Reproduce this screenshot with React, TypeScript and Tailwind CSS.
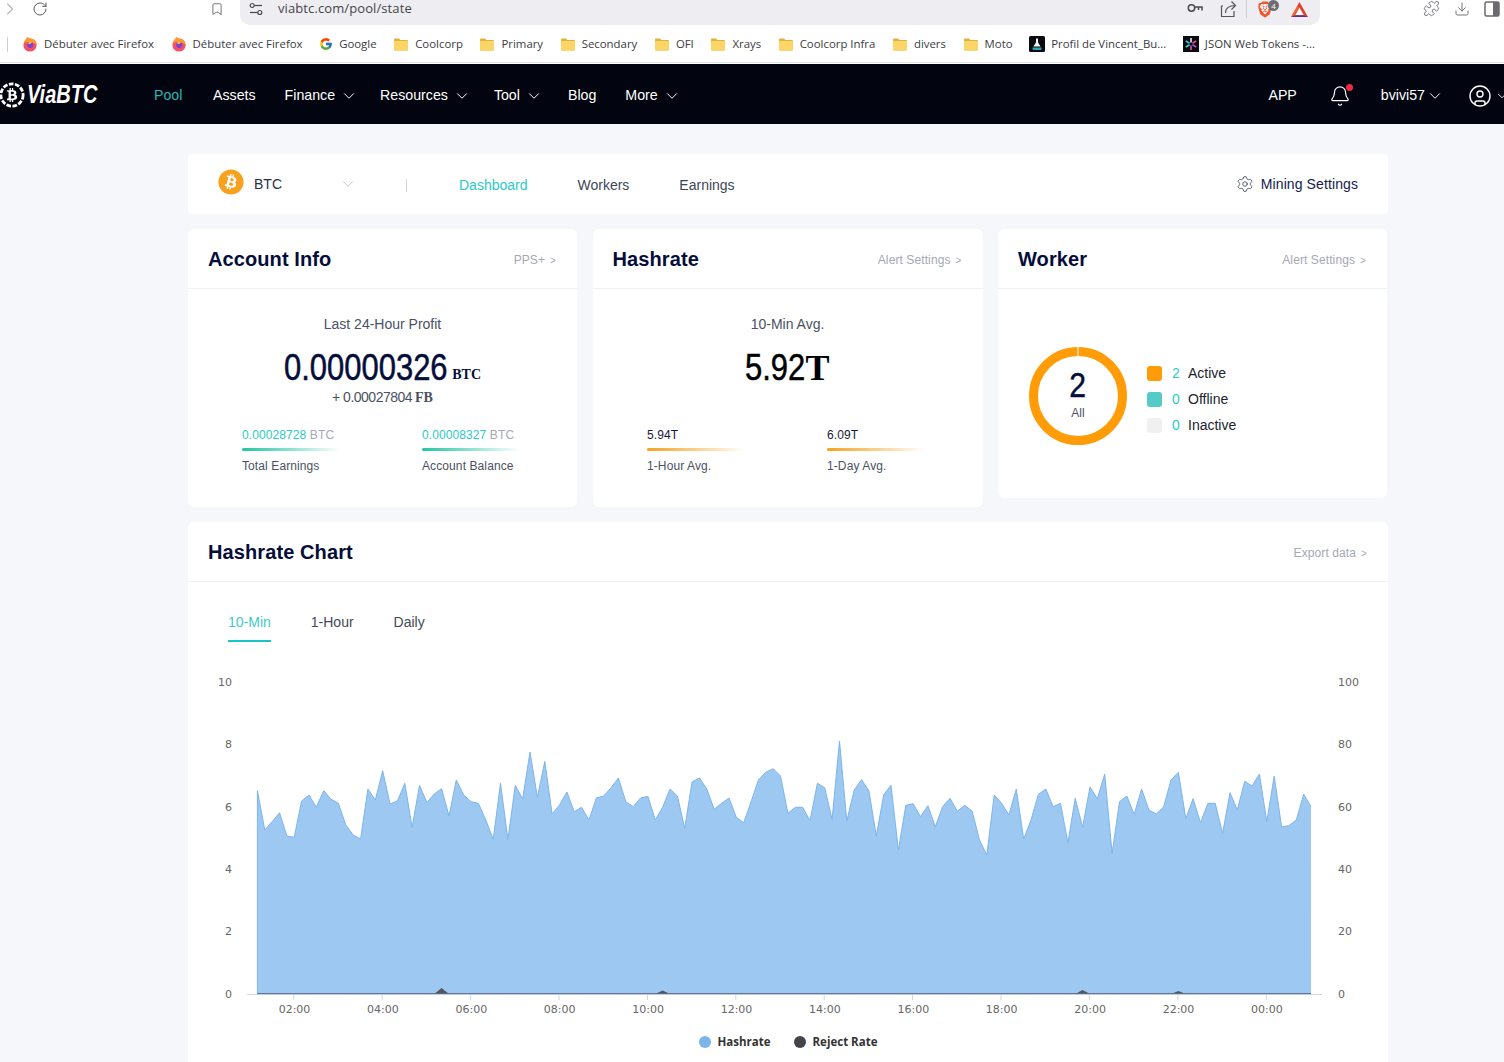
import { Bell, Bookmark, ChevronDown, ChevronRight, CircleUser, Download, Puzzle, RotateCw, Settings } from "lucide-react";
import { FaBitcoin, FaBtc } from "react-icons/fa";
import { FcGoogle } from "react-icons/fc";
import { SiBrave } from "react-icons/si";

// hashrate readings, traced as y offsets (3x) from the top of the plot crop
const HASHRATE = [
  212, 330, 305, 278, 348, 352, 243, 225, 262, 212, 238, 250, 315, 345, 357, 207, 240, 152, 252, 243, 190, 322, 196,
  248, 222, 206, 288, 180, 225, 245, 250, 300, 358, 190, 358, 196, 237, 96, 232, 124, 282, 255, 216, 275, 262, 300,
  234, 228, 203, 174, 245, 260, 234, 229, 300, 262, 207, 228, 325, 185, 174, 207, 268, 250, 234, 292, 308, 245, 180,
  157, 146, 168, 280, 262, 262, 302, 190, 203, 298, 63, 303, 210, 179, 212, 348, 224, 196, 390, 256, 251, 290, 257,
  320, 260, 235, 274, 256, 273, 360, 405, 225, 250, 285, 207, 357, 300, 223, 207, 260, 250, 368, 235, 322, 201, 236,
  162, 400, 245, 228, 283, 207, 270, 282, 260, 180, 157, 296, 236, 308, 250, 250, 340, 218, 270, 184, 198, 162, 305,
  168, 321, 317, 300, 223, 260,
];

const X0 = 257.4;
const STEP = 7.368;
const BASE = 994;

const hashLine = HASHRATE.map((z, i) => `${(X0 + STEP * i).toFixed(1)},${(720 + z / 3).toFixed(1)}`).join(" ");
const hashArea = `M${X0},${BASE} L${hashLine} L${X0 + STEP * 143},${BASE} Z`;

const REJECT = [
  { i: 25, top: 988 },
  { i: 55, top: 990.5 },
  { i: 112, top: 990 },
  { i: 125, top: 991 },
];

const TIMES = ["02:00", "04:00", "06:00", "08:00", "10:00", "12:00", "14:00", "16:00", "18:00", "20:00", "22:00", "00:00"];
const LEFT_AXIS = [
  { v: "10", y: 682 },
  { v: "8", y: 744 },
  { v: "6", y: 807 },
  { v: "4", y: 869 },
  { v: "2", y: 931 },
  { v: "0", y: 994 },
];
const RIGHT_AXIS = ["100", "80", "60", "40", "20", "0"];

function FirefoxIcon() {
  return (
    <svg viewBox="0 0 16 16" className="w-4 h-4 shrink-0">
      <circle cx="8" cy="9" r="6.6" fill="#f4506a" />
      <path d="M1.8 7 C2.6 3.6 5 2.4 5.8 .6 C6.4 2.4 8 2.6 10 3 C13 3.6 14.8 6.4 14.6 9 C12 6 6 5 1.8 7 Z" fill="#ff9a2e" />
      <circle cx="8.2" cy="9" r="3" fill="#7a45cc" />
      <path d="M5.8 7 C7 5.6 9.4 5.8 10.4 7 C9 6.6 8.4 7.4 8.6 8 C7.4 8 6.4 7.8 5.8 7 Z" fill="#ffbd4f" />
    </svg>
  );
}

function FolderIcon() {
  return (
    <svg viewBox="0 0 16 16" className="w-4 h-4 shrink-0">
      <path d="M1 3.5 a1 1 0 0 1 1-1 h4 l1.5 1.5 h6.5 a1 1 0 0 1 1 1 v8.5 a1 1 0 0 1-1 1 h-12 a1 1 0 0 1-1-1 Z" fill="#e0b13c" />
      <rect x="1" y="5" width="14" height="9.5" rx="1" fill="#fbd667" />
    </svg>
  );
}

function ProfileIcon() {
  return (
    <svg viewBox="0 0 16 16" className="w-4 h-4 shrink-0">
      <rect width="16" height="16" rx="1.5" fill="#0b0b0f" />
      <path d="M7 2.5 h2 v4 l2.6 4 h-7.2 L7 6.5 Z" fill="#f4f4f4" />
      <path d="M3.5 11.5 h9 v1.5 a1 1 0 0 1-1 1 h-7 a1 1 0 0 1-1-1 Z" fill="#25a6b8" />
    </svg>
  );
}

function JwtIcon() {
  return (
    <svg viewBox="0 0 16 16" className="w-4 h-4 shrink-0">
      <rect width="16" height="16" fill="#0b0b0f" />
      <g strokeWidth="1.6">
        <path d="M8 2 V6.4" stroke="#f0f0f0" />
        <path d="M8 9.6 V14" stroke="#e74ea8" />
        <path d="M2.8 5 L6.6 7.2" stroke="#28c8e8" />
        <path d="M9.4 8.8 L13.2 11" stroke="#9a58e0" />
        <path d="M13.2 5 L9.4 7.2" stroke="#e84c8c" />
        <path d="M6.6 8.8 L2.8 11" stroke="#35d8b8" />
      </g>
    </svg>
  );
}

function BrowserBar() {
  const bookmarks = [
    { icon: <FirefoxIcon />, label: "Débuter avec Firefox" },
    { icon: <FirefoxIcon />, label: "Débuter avec Firefox" },
    { icon: <FcGoogle className="w-[14px] h-[14px] shrink-0" />, label: "Google" },
    { icon: <FolderIcon />, label: "Coolcorp" },
    { icon: <FolderIcon />, label: "Primary" },
    { icon: <FolderIcon />, label: "Secondary" },
    { icon: <FolderIcon />, label: "OFI" },
    { icon: <FolderIcon />, label: "Xrays" },
    { icon: <FolderIcon />, label: "Coolcorp Infra" },
    { icon: <FolderIcon />, label: "divers" },
    { icon: <FolderIcon />, label: "Moto" },
    { icon: <ProfileIcon />, label: "Profil de Vincent_Bu..." },
    { icon: <JwtIcon />, label: "JSON Web Tokens -..." },
  ];

  return (
    <div className="h-16 bg-white font-['Open_Sans',sans-serif] text-[#3b3b3f]">
      <div className="h-[26px] flex items-start">
        <div className="w-[240px] h-[17px] flex items-center shrink-0 text-[#5b5b60]">
          <ChevronRight className="w-5 h-5 text-[#b5b5ba]" strokeWidth={1.3} />
          <RotateCw className="w-4 h-4 ml-3" strokeWidth={1.5} />
          <Bookmark className="w-[14px] h-4 ml-[162px]" strokeWidth={1.4} />
        </div>
        <div className="w-[1080px] h-[25px] bg-[#eeeef2] rounded-b-[10px] flex items-center pl-[9px] pr-[11px] pb-[7px]">
          <svg viewBox="0 0 14 14" className="w-[14px] h-[14px] text-[#45454a]" fill="none" stroke="currentColor" strokeWidth="1.2">
            <circle cx="3.2" cy="3.5" r="2" />
            <path d="M5.5 3.5 H13" />
            <circle cx="10.8" cy="10.5" r="2" />
            <path d="M1 10.5 H8.5" />
          </svg>
          <span className="ml-[15px] text-[13px] tracking-[0.1px] text-[#44444a]">viabtc.com/pool/state</span>
          <div className="ml-auto flex items-center">
            <svg viewBox="0 0 16 12" className="w-4 h-3 text-[#4a4a50]" fill="none" stroke="currentColor" strokeWidth="1.5">
              <circle cx="4.5" cy="5" r="3.2" />
              <path d="M7.8 4 H15 V7.5 M11.5 4 V7" />
            </svg>
            <svg viewBox="0 0 17 18" className="w-[17px] h-[18px] ml-[17px] text-[#55555a]" fill="none" stroke="currentColor" strokeWidth="1.2">
              <path d="M3 6 H1.5 V16.5 H14 V11" />
              <path d="M5.5 13 C5.5 8 9 5.5 15.5 5.5 M11.5 1.5 L15.5 5.5 L11.5 9.5" />
            </svg>
            <div className="w-px h-[18px] bg-[#cfcfd4] ml-[9px]" />
            <div className="relative ml-[10px]">
              <SiBrave className="w-[16px] h-[19px] text-[#f0572a]" />
              <span className="absolute top-0 -right-[6px] w-[11px] h-[11px] rounded-full bg-[#6d6d73] text-white text-[8px] leading-[11px] text-center">
                4
              </span>
            </div>
            <svg viewBox="0 0 20 18" className="w-[19px] h-[17px] ml-[17px]">
              <path d="M10 1 L19 17 H1 Z" fill="#e5402f" />
              <path d="M10 7 L14.6 15 H5.4 Z" fill="#fff" />
              <path d="M1 17 L5.4 15 H14.6 L19 17 Z" fill="#662d91" />
              <path d="M10 7 L5.4 15 L1 17 L7 6 Z" fill="#f4792f" opacity="0.6" />
            </svg>
          </div>
        </div>
        <div className="flex-1 flex items-center h-[17px] pl-[103px] text-[#6a6a70]">
          <Puzzle className="w-[17px] h-[17px]" strokeWidth={1.3} />
          <Download className="w-4 h-4 ml-[14px]" strokeWidth={1.4} />
          <svg viewBox="0 0 16 16" className="w-4 h-4 ml-[14px]">
            <rect x="1" y="1" width="14" height="14" rx="1.5" fill="#fff" stroke="currentColor" strokeWidth="1.5" />
            <rect x="9" y="1" width="6" height="14" fill="currentColor" />
          </svg>
        </div>
      </div>
      <div className="h-[37px] flex items-center border-b border-[#e3e3e6] pl-[7px]">
        <div className="w-px h-[15px] bg-[#d0d0d4] mr-[14px]" />
        <div className="flex items-center gap-[16.6px] text-[11.4px] whitespace-nowrap">
          {bookmarks.map((b, i) => (
            <div key={i} className="flex items-center gap-1.5">
              {b.icon}
              <span>{b.label}</span>
            </div>
          ))}
        </div>
      </div>
    </div>
  );
}

function NavItem({ label, active, caret, className }: { label: string; active?: boolean; caret?: boolean; className?: string }) {
  return (
    <div className={`flex items-center ${active ? "text-[#2bb6b3]" : "text-white"} ${className ?? ""}`}>
      <span>{label}</span>
      {caret && <ChevronDown className="w-[18px] h-[18px] ml-[5px] -mr-[7px]" strokeWidth={1.3} />}
    </div>
  );
}

function TopNav() {
  return (
    <div className="h-[60px] pt-1 bg-[#02040f] flex items-center text-[14.2px] whitespace-nowrap overflow-hidden">
      <div className="w-[154px] shrink-0 flex items-center -mt-[3px]">
        <div className="relative w-[26px] h-[28px] -ml-px shrink-0 flex items-center justify-center">
          <svg viewBox="0 0 28 28" className="absolute inset-0 w-full h-full">
            <circle cx="14" cy="14" r="12" fill="none" stroke="#fff" strokeWidth="3" strokeDasharray="5 1.6" />
          </svg>
          <FaBtc className="w-[12px] h-[14px] text-white" />
        </div>
        <span className="inline-block ml-[2px] text-[25px] leading-none italic font-bold text-white origin-left scale-x-[0.8]">
          ViaBTC
        </span>
      </div>
      <div className="flex items-center gap-[29px]">
        <NavItem label="Pool" active className="mr-[1.6px]" />
        <NavItem label="Assets" />
        <NavItem label="Finance" caret />
        <NavItem label="Resources" caret className="mr-px" />
        <NavItem label="Tool" caret className="mr-[3px]" />
        <NavItem label="Blog" />
        <NavItem label="More" caret />
      </div>
      <div className="ml-auto flex items-center text-white shrink-0 -mr-[5px]">
        <span>APP</span>
        <div className="relative ml-[32px]">
          <Bell className="w-[22px] h-[24px]" strokeWidth={1.3} />
          <span className="absolute top-0 right-[-2px] w-[7px] h-[7px] rounded-full bg-[#ee2a44]" />
        </div>
        <span className="ml-[30px]">bvivi57</span>
        <ChevronDown className="w-[18px] h-[18px] ml-px" strokeWidth={1.3} />
        <CircleUser className="w-6 h-6 ml-6" strokeWidth={1.4} />
        <ChevronDown className="w-[14px] h-[14px] ml-[3px]" strokeWidth={1.5} />
      </div>
    </div>
  );
}

function SubNav() {
  return (
    <div className="h-[60px] bg-white rounded-[4px] flex items-center pl-[30px] pr-[30px]">
      <FaBitcoin className="w-[26px] h-[26px] text-[#f7a11e] -mt-1" />
      <span className="ml-[10px] w-[85px] text-[14px] text-[#2a2f45]">BTC</span>
      <ChevronDown className="w-[18px] h-[18px] text-[#b4b8c2]" strokeWidth={1.1} />
      <div className="w-px h-[13px] mt-0.5 bg-[#d0d3d8] ml-[49px]" />
      <div className="flex items-center gap-[50px] ml-[52px] text-[14px] text-[#3d4656] mt-0.5">
        <span className="text-[#2ccac6]">Dashboard</span>
        <span>Workers</span>
        <span>Earnings</span>
      </div>
      <div className="ml-auto flex items-center text-[14px] text-[#14204f]">
        <Settings className="w-[18px] h-[18px] text-[#3a4358]" strokeWidth={1.1} />
        <span className="ml-[7px] tracking-[0.1px]">Mining Settings</span>
      </div>
    </div>
  );
}

function Card({ title, link, children }: { title: string; link: string; children: React.ReactNode }) {
  return (
    <div className="bg-white rounded-[6px]">
      <div className="h-[60px] flex items-center justify-between pl-5 pr-[21px] border-b border-[#f0f1f3]">
        <h2 className="text-[20px] font-bold text-[#050d3a] tracking-[0.1px]">{title}</h2>
        <LinkText label={link} />
      </div>
      {children}
    </div>
  );
}

function LinkText({ label }: { label: string }) {
  return (
    <span className="mt-[2px] text-[12px] tracking-[0.1px] text-[#a5a8b5]">
      {label}
      <span className="ml-[5px] text-[10px]">&gt;</span>
    </span>
  );
}

function Stat({ value, unit, label, barFrom }: { value: string; unit?: string; label: string; barFrom: string }) {
  return (
    <div>
      <div className="text-[12px] leading-4 tracking-[0.1px]">
        <span className={unit ? "text-[#2ccac6]" : "text-[#141a38]"}>{value}</span>
        {unit && <span className="text-[#a5a8b5]"> {unit}</span>}
      </div>
      <div className={`mt-[5px] w-[98px] h-[3px] rounded-l-full bg-gradient-to-r to-transparent ${barFrom}`} />
      <div className="mt-[7px] text-[12px] leading-4 tracking-[0.1px] text-[#4a5262]">{label}</div>
    </div>
  );
}

function BigNumber({ children }: { children: string }) {
  return (
    <span className="inline-block text-[36px] leading-10 origin-left scale-x-[0.86] [-webkit-text-stroke:0.5px]">
      {children}
    </span>
  );
}

function AccountInfo() {
  return (
    <Card title="Account Info" link="PPS+">
      <div className="pt-[25px] pb-[33px]">
        <div className="text-center text-[14px] leading-5 text-[#4a5262]">Last 24-Hour Profit</div>
        <div className="mt-[14px] h-10 flex justify-center items-center text-[#050d3a]">
          <BigNumber>0.00000326</BigNumber>
          <span className="-ml-[22px] mt-[12px] font-['Liberation_Serif',serif] font-bold text-[14px]">BTC</span>
        </div>
        <div className="-mt-px h-5 flex justify-center items-center text-[14px] text-[#4a5262]">
          <span className="inline-block tracking-[-0.5px]">+ 0.00027804</span>
          <span className="ml-[3px] font-['Liberation_Serif',serif] font-bold">FB</span>
        </div>
        <div className="mt-5 pl-[54px] grid grid-cols-[180px_1fr]">
          <Stat value="0.00028728" unit="BTC" label="Total Earnings" barFrom="from-[#1fc6a0]" />
          <Stat value="0.00008327" unit="BTC" label="Account Balance" barFrom="from-[#1fc6a0]" />
        </div>
      </div>
    </Card>
  );
}

function Hashrate() {
  return (
    <Card title="Hashrate" link="Alert Settings">
      <div className="pt-[25px] pb-[33px]">
        <div className="text-center text-[14px] leading-5 text-[#4a5262]">10-Min Avg.</div>
        <div className="mt-[14px] h-10 flex justify-center items-center text-black">
          <BigNumber>5.92</BigNumber>
          <span className="-ml-[10px] font-['Liberation_Serif',serif] font-bold text-[36px] leading-10">T</span>
        </div>
        <div className="-mt-px h-5" />
        <div className="mt-5 pl-[54.5px] grid grid-cols-[180px_1fr]">
          <Stat value="5.94T" label="1-Hour Avg." barFrom="from-[#f5a21e]" />
          <Stat value="6.09T" label="1-Day Avg." barFrom="from-[#f5a21e]" />
        </div>
      </div>
    </Card>
  );
}

function Worker() {
  const rows = [
    { color: "bg-[#ff9c07]", n: "2", label: "Active" },
    { color: "bg-[#55cbc9]", n: "0", label: "Offline" },
    { color: "bg-[#f0f0f1]", n: "0", label: "Inactive" },
  ];
  return (
    <Card title="Worker" link="Alert Settings">
      <div className="pt-[58px] pb-[53px] pl-[31px] flex items-start">
        <div className="relative w-[98px] h-[98px] shrink-0">
          <svg viewBox="0 0 98 98" className="w-full h-full">
            <circle cx="49" cy="49" r="44.5" fill="none" stroke="#ff9c07" strokeWidth="9" />
            <rect x="48.5" y="0" width="1" height="9" fill="#fff" />
          </svg>
          <div className="absolute inset-0 flex flex-col items-center">
            <span className="mt-[18px] h-10 text-[35px] leading-10 text-[#050d3a] scale-x-[0.86] [-webkit-text-stroke:0.5px]">
              2
            </span>
            <span className="text-[12px] leading-4 text-[#4a5262]">All</span>
          </div>
        </div>
        <div className="ml-[20px] mt-[13px] text-[14px]">
          {rows.map((r) => (
            <div key={r.label} className="h-[26px] flex items-center">
              <div className={`w-[15px] h-[15px] rounded-[3px] ${r.color}`} />
              <span className="ml-[10px] w-[16px] text-[#2ccac6]">{r.n}</span>
              <span className="text-[#20242f]">{r.label}</span>
            </div>
          ))}
        </div>
      </div>
    </Card>
  );
}

function ChartPlot() {
  const tick = "font-['DejaVu_Sans',sans-serif] text-[11px] fill-[#666666]";
  return (
    <svg viewBox="188 660 1200 366" className="block w-[1200px] h-[366px]">
      {LEFT_AXIS.map((a, i) => (
        <g key={a.v}>
          <text x={232} y={a.y + 4} textAnchor="end" className={tick}>
            {a.v}
          </text>
          <text x={1338} y={a.y + 4} className={tick}>
            {RIGHT_AXIS[i]}
          </text>
        </g>
      ))}
      <path d={`M247 994.5 H1322`} stroke="#ccd6eb" />
      {TIMES.map((t, i) => {
        const x = 293.8 + 88.4 * i;
        return (
          <g key={t}>
            <path d={`M${x} 994 V1000`} stroke="#ccd6eb" />
            <text x={x + 0.7} y={1013} textAnchor="middle" className={tick}>
              {t}
            </text>
          </g>
        );
      })}
      <path d={hashArea} fill="#7cb5ec" fillOpacity="0.75" />
      <polyline points={hashLine} fill="none" stroke="#7cb5ec" />
      <path d={`M${X0} ${BASE} V${720 + HASHRATE[0] / 3}`} stroke="#7cb5ec" />
      {REJECT.map((r) => {
        const x = X0 + STEP * r.i;
        return <path key={r.i} d={`M${x - STEP} ${BASE} L${x} ${r.top} L${x + STEP} ${BASE} Z`} fill="#434348" fillOpacity="0.85" />;
      })}
      <path d={`M${X0} 993.6 H${X0 + STEP * 143}`} stroke="#5d6d86" />
    </svg>
  );
}

function HashrateChart() {
  return (
    <div className="mt-[15px] pb-10 bg-white rounded-[6px]">
      <div className="h-[60px] flex items-center justify-between pl-5 pr-[21px] border-b border-[#f0f1f3]">
        <h2 className="text-[20px] font-bold text-[#050d3a] tracking-[0.1px]">Hashrate Chart</h2>
        <LinkText label="Export data" />
      </div>
      <div className="pl-10 pt-[22px] flex items-start gap-10 text-[14px] text-[#444a55] h-[78px]">
        <div className="text-[#3fc9c9] h-[38px] pt-[8px] border-b-2 border-[#16c5c5]">10-Min</div>
        <div className="pt-[8px]">1-Hour</div>
        <div className="pt-[8px]">Daily</div>
      </div>
      <ChartPlot />
      <div className="h-8 flex items-center justify-center font-['Open_Sans',sans-serif] font-bold text-[11.5px] text-[#333333]">
        <div className="w-3 h-3 rounded-full bg-[#7cb5ec]" />
        <span className="ml-[7px]">Hashrate</span>
        <div className="ml-[23px] w-3 h-3 rounded-full bg-[#434348]" />
        <span className="ml-[7px]">Reject Rate</span>
      </div>
    </div>
  );
}

export default function App() {
  return (
    <div className="h-screen overflow-hidden bg-[#f5f7fa] font-['Liberation_Sans',Arial,sans-serif]">
      <BrowserBar />
      <TopNav />
      <div className="w-[1200px] ml-[188px] pt-[30px]">
        <SubNav />
        <div className="mt-[15px] grid grid-cols-[389px_390px_389px] gap-[15.5px] items-start">
          <AccountInfo />
          <Hashrate />
          <Worker />
        </div>
        <HashrateChart />
      </div>
    </div>
  );
}
